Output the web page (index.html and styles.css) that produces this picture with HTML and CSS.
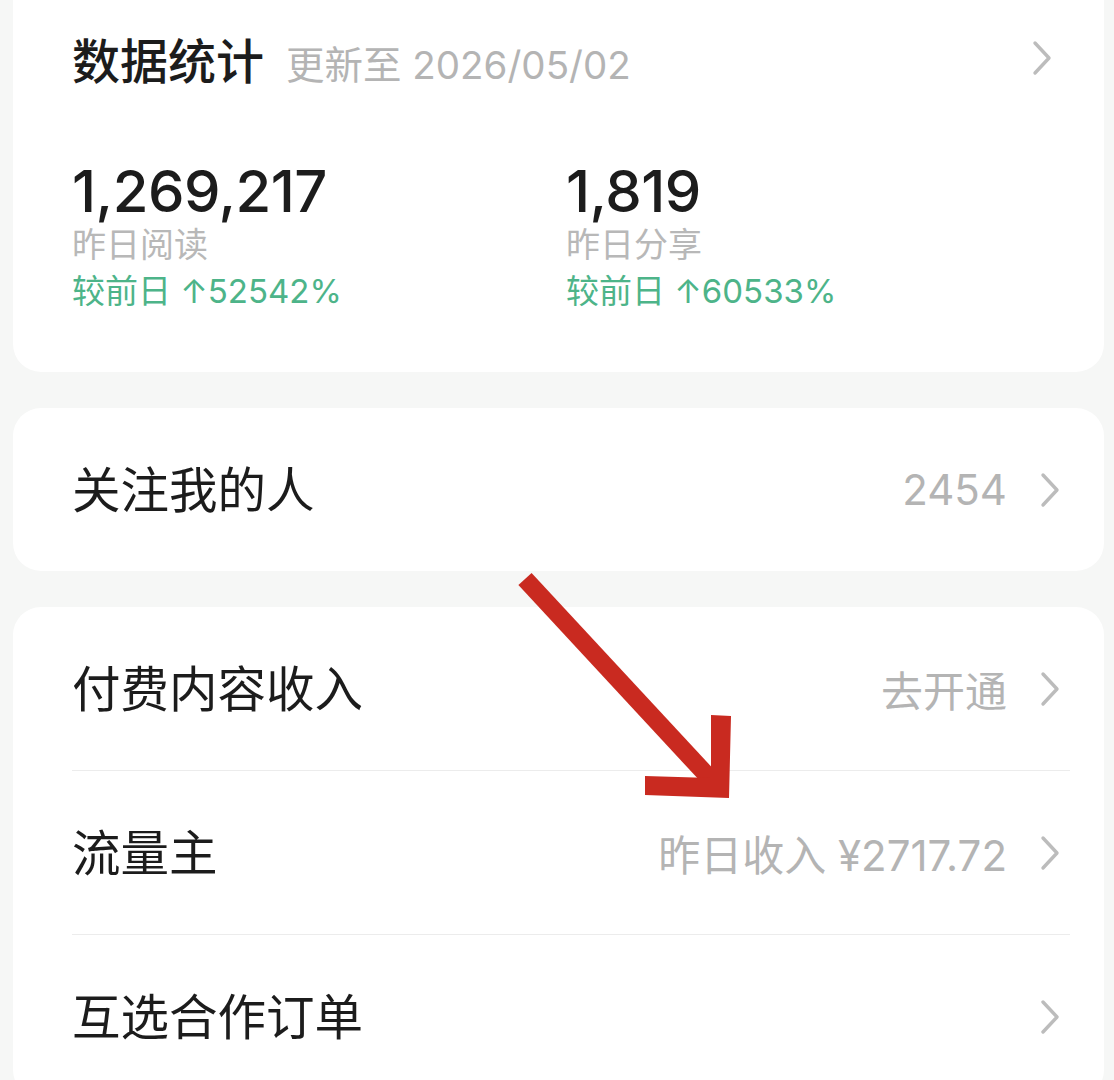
FILE: index.html
```html
<!DOCTYPE html>
<html lang="zh-CN">
<head>
<meta charset="utf-8">
<title>数据统计</title>
<link rel="stylesheet" href="styles.css">
</head>
<body>
<div class="page">
  <section class="card card-stats">
    <div class="stats-head">
      <div class="head-left">
        <span class="title">数据统计</span>
        <span class="subtitle">更新至 2026/05/02</span>
      </div>
      <svg class="chev" viewBox="0 0 20 36"><path d="M3 3 L17 18 L3 33"/></svg>
    </div>
    <div class="stats-grid">
      <div class="stat">
        <div class="num">1,269,217</div>
        <div class="label">昨日阅读</div>
        <div class="trend">较前日 ↑52542%</div>
      </div>
      <div class="stat">
        <div class="num">1,819</div>
        <div class="label">昨日分享</div>
        <div class="trend">较前日 ↑60533%</div>
      </div>
    </div>
  </section>

  <section class="card">
    <div class="row">
      <span class="row-title">关注我的人</span>
      <span class="row-right"><span class="row-value">2454</span><svg class="chev" viewBox="0 0 20 36"><path d="M3 3 L17 18 L3 33"/></svg></span>
    </div>
  </section>

  <section class="card">
    <div class="row">
      <span class="row-title">付费内容收入</span>
      <span class="row-right"><span class="row-value">去开通</span><svg class="chev" viewBox="0 0 20 36"><path d="M3 3 L17 18 L3 33"/></svg></span>
    </div>
    <div class="divider"></div>
    <div class="row">
      <span class="row-title">流量主</span>
      <span class="row-right"><span class="row-value">昨日收入 ¥2717.72</span><svg class="chev" viewBox="0 0 20 36"><path d="M3 3 L17 18 L3 33"/></svg></span>
    </div>
    <div class="divider"></div>
    <div class="row">
      <span class="row-title">互选合作订单</span>
      <span class="row-right"><svg class="chev" viewBox="0 0 20 36"><path d="M3 3 L17 18 L3 33"/></svg></span>
    </div>
  </section>
</div>

<svg class="arrow" viewBox="0 0 1114 1080" width="1114" height="1080">
  <line x1="525" y1="579" x2="716" y2="785" stroke="#c92a20" stroke-width="18"/>
  <polygon points="711,715 731,716 729,798 645,795 645,776 711,778" fill="#c92a20"/>
</svg>
</body>
</html>
```

FILE: styles.css
```css
html, body {
  margin: 0;
  padding: 0;
}
body {
  background: #f6f7f6;
  font-family: Inter, "Noto Sans CJK SC", sans-serif;
  color: #1c1c1c;
  width: 1114px;
  height: 1080px;
  overflow: hidden;
  position: relative;
}
.page {
  display: flex;
  flex-direction: column;
  gap: 36px;
  padding: 0 10px 0 13px;
  margin-top: -30px;
}
.card {
  background: #fff;
  border-radius: 28px;
}
.card-stats {
  padding: 30px 0 59px 59px;
}
.stats-head {
  height: 116px;
  display: flex;
  align-items: center;
  justify-content: space-between;
  padding-right: 52px;
}
.head-left {
  display: flex;
  align-items: baseline;
  gap: 22px;
}
.title {
  font-family: "Noto Sans CJK SC", sans-serif;
  font-size: 48px;
  font-weight: 500;
  color: #1c1c1c;
}
.subtitle {
  font-family: Inter, "Noto Sans CJK SC", sans-serif;
  font-size: 38.5px;
  color: #b4b4b4;
}
.stats-grid {
  display: grid;
  grid-template-columns: 494px 1fr;
  margin-top: 46px;
}
.num {
  font-size: 58px;
  line-height: 58px;
  font-weight: 500;
  letter-spacing: -0.5px;
  color: #1c1c1c;
}
.label {
  font-family: "Noto Sans CJK SC", sans-serif;
  font-size: 34px;
  line-height: 42px;
  margin-top: 2px;
  color: #b8b8b8;
}
.trend {
  font-size: 33px;
  line-height: 44px;
  margin-top: 5px;
  color: #4db489;
}
.row {
  height: 163px;
  display: flex;
  align-items: center;
  justify-content: space-between;
  padding: 0 44px 0 59px;
}
.row-title {
  font-family: "Noto Sans CJK SC", sans-serif;
  font-size: 48.5px;
  line-height: 60px;
  margin-top: -5px;
  color: #1c1c1c;
}
.row-right {
  display: flex;
  align-items: center;
  gap: 33px;
}
.row-value {
  font-size: 42px;
  color: #b4b4b4;
}
.divider {
  height: 1px;
  background: #ececec;
  margin: 0 34px 0 59px;
}
.chev {
  width: 20px;
  height: 36px;
  display: block;
}
.chev path {
  fill: none;
  stroke: #bcbcbc;
  stroke-width: 3.4;
  stroke-linecap: round;
  stroke-linejoin: round;
}
.arrow {
  position: absolute;
  left: 0;
  top: 0;
  pointer-events: none;
}
```
